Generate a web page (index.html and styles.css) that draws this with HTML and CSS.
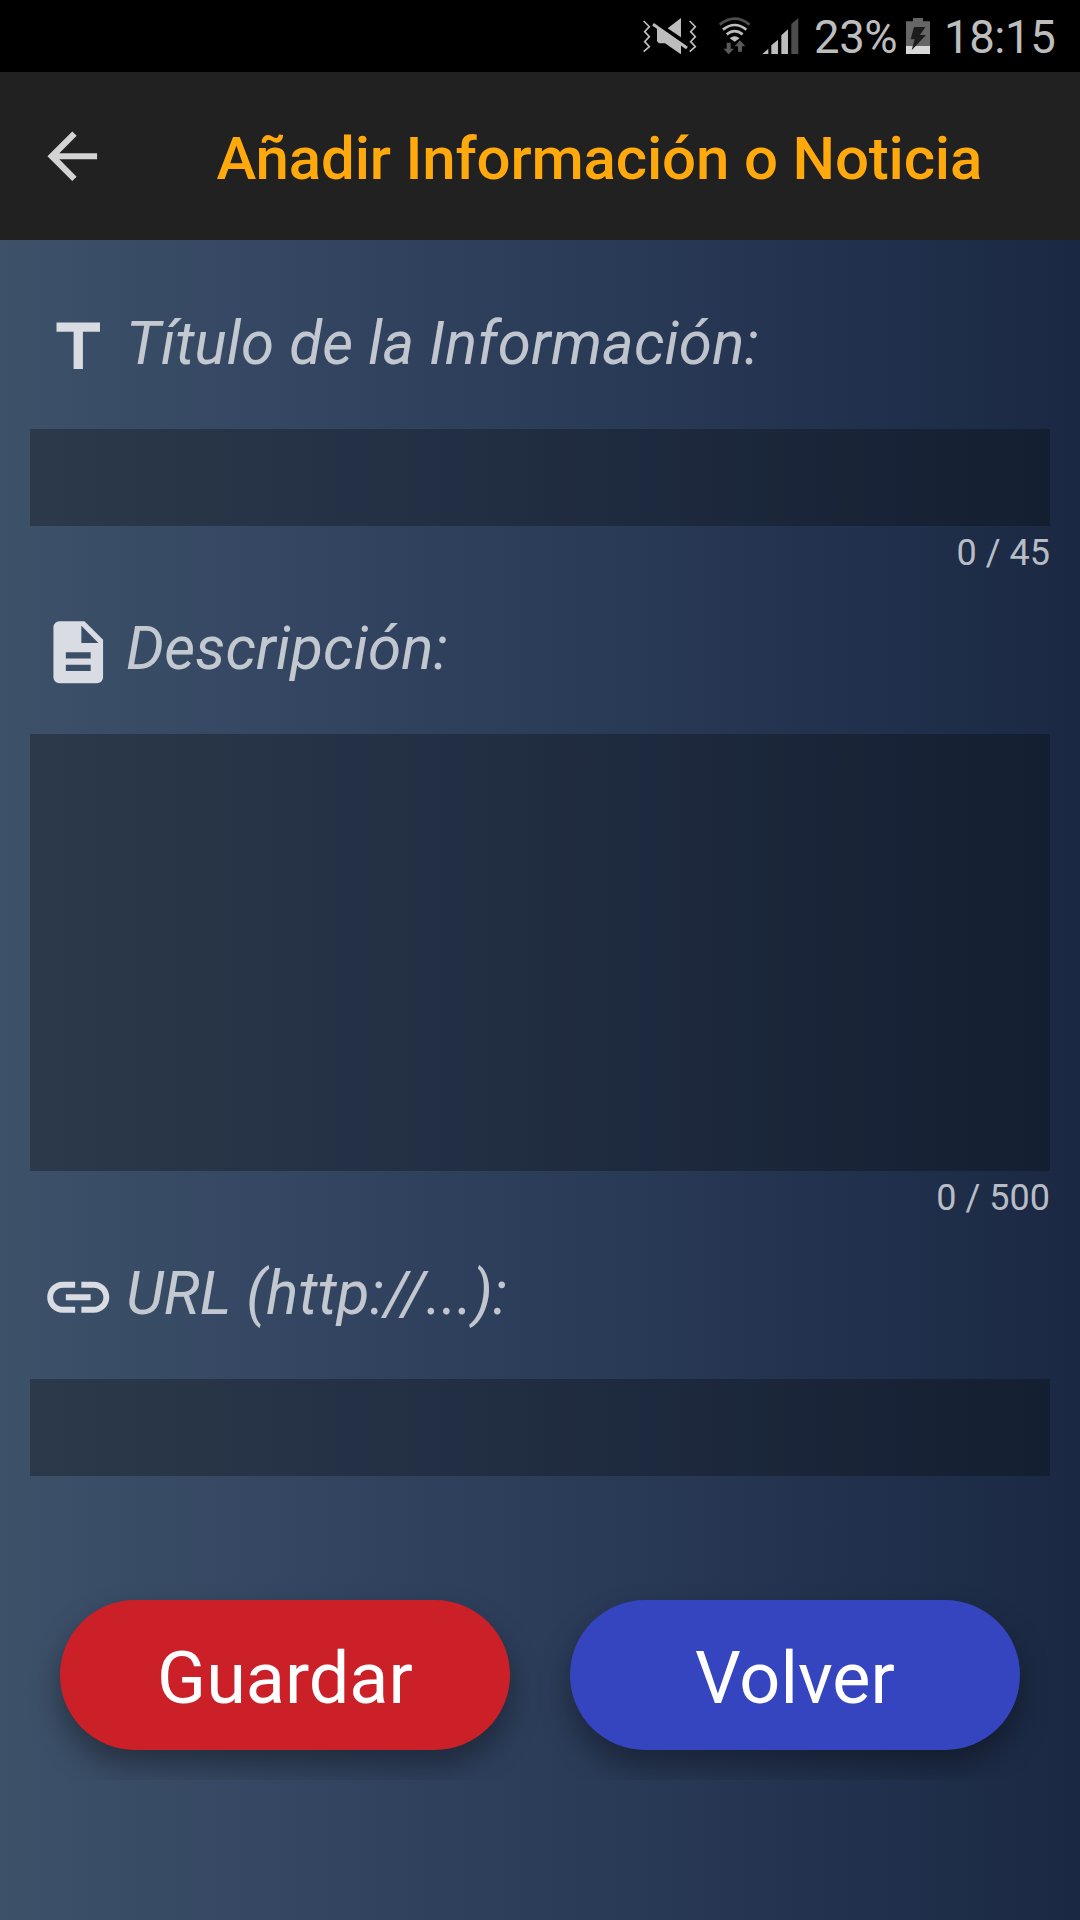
FILE: index.html
```html
<!DOCTYPE html>
<html lang="es">
<head>
<meta charset="utf-8">
<title>Añadir Información o Noticia</title>
<link rel="stylesheet" href="styles.css">
</head>
<body>
<div class="status">
  <svg class="status-mute" viewBox="0 0 162 110" fill="#bdbdbd">
    <path d="M74 31L114 0v58z"/>
    <path d="M42 30l72 50v29L66 76H48l-6-6z"/>
    <path d="M30 19l102 71" stroke="#bdbdbd" stroke-width="9" fill="none"/>
    <g fill="none" stroke="#bdbdbd" stroke-width="5">
      <path d="M2 9l17 17L5 41l14 15L5 71l14 15L2 101"/>
      <path d="M140 9l17 17-14 15 14 15-14 15 14 15-17 15"/>
    </g>
  </svg>
  <svg class="status-wifi" viewBox="0 0 94 112">
    <g fill="none" stroke-width="8">
      <path d="M2 23Q47-13 92 23" stroke="#4d4d4d"/>
      <path d="M12 38Q47 10 82 38" stroke="#bdbdbd"/>
      <path d="M23 52Q47 33 71 52" stroke="#bdbdbd"/>
    </g>
    <path d="M32 64Q47 52 62 64L47 74z" fill="#bdbdbd"/>
    <path d="M23 77h12v18h10L29 112 13 95h10zM57 104V88H47l16-18 16 18H69v16z" fill="#5a5a5a"/>
  </svg>
  <svg class="status-signal" viewBox="0 0 110 109">
    <path d="M0 109l19-17v17zM28 82l20-17v44H28zM58 52l20-18v75H58z" fill="#bdbdbd"/>
    <path d="M88 18L109 0v109H88z" fill="#4d4d4d"/>
  </svg>
  <span class="status-percent">23%</span>
  <svg class="status-battery" viewBox="0 0 72 108">
    <path d="M0 10h21V0h30v10h21v98H0z" fill="#666"/>
    <path d="M0 84h72v24H0z" fill="#d8d8d8"/>
    <path d="M24 27h34L42 51h18L17 97l9-33H14z" fill="#1c1c1c"/>
  </svg>
  <span class="status-time">18:15</span>
</div>

<header class="toolbar">
  <svg class="icon" viewBox="0 0 24 24" fill="#d3d3d3"><path d="M20 11H7.83l5.59-5.59L12 4l-8 8 8 8 1.41-1.41L7.83 13H20v-2z"/></svg>
  <h1 class="toolbar-title">Añadir Información o Noticia</h1>
</header>

<main class="content">
  <label class="label label-title" for="titulo">
    <svg class="icon" viewBox="0 0 24 24"><path d="M5 4v3h5.500v12h3V7H19V4z"/></svg>
    <span>Título de la Información:</span>
  </label>
  <input class="field" id="titulo" type="text" maxlength="45">
  <div class="counter">0 / 45</div>

  <label class="label" for="descripcion">
    <svg class="icon" viewBox="0 0 24 24"><path d="M14 2H6c-1.100 0-1.990.9-1.990 2L4 20c0 1.100.89 2 1.990 2H18c1.100 0 2-.9 2-2V8l-6-6zm2 16H8v-2h8v2zm0-4H8v-2h8v2zm-3-5V3.500L18.500 9H13z"/></svg>
    <span>Descripción:</span>
  </label>
  <textarea class="field field-area" id="descripcion" maxlength="500"></textarea>
  <div class="counter">0 / 500</div>

  <label class="label" for="url">
    <svg class="icon" viewBox="0 0 24 24"><path d="M3.900 12c0-1.710 1.390-3.100 3.100-3.100h4V7H7c-2.760 0-5 2.240-5 5s2.240 5 5 5h4v-1.900H7c-1.710 0-3.100-1.390-3.100-3.100zM8 13h8v-2H8v2zm9-6h-4v1.900h4c1.710 0 3.100 1.390 3.100 3.100s-1.390 3.100-3.100 3.100h-4V17h4c2.760 0 5-2.240 5-5s-2.240-5-5-5z"/></svg>
    <span>URL (http://...):</span>
  </label>
  <input class="field" id="url" type="text">

  <div class="actions">
    <button class="btn btn-save" type="button">Guardar</button>
    <button class="btn btn-back" type="button">Volver</button>
  </div>
</main>
</body>
</html>
```
FILE: styles.css
```css
* { box-sizing: border-box; }

body {
  margin: 0;
  width: 1080px;
  height: 1920px;
  display: flex;
  flex-direction: column;
  overflow: hidden;
  font-family: Roboto, sans-serif;
}

.status {
  height: 72px;
  padding-right: 24px;
  display: flex;
  justify-content: flex-end;
  align-items: center;
  background: #000;
  color: #bdbdbd;
  font-size: 45.500px;
  line-height: 72px;
}
.status svg { flex: none; display: block; }
.status span { padding-top: 4px; letter-spacing: -.4px; }
.status-mute { width: 54px; height: 36.67px; margin-right: 22px; }
.status-wifi { width: 31.33px; height: 37.33px; margin-right: 12.500px; }
.status-signal { width: 36.67px; height: 36.33px; margin-right: 15px; }
.status-percent { width: 92px; white-space: nowrap; }
.status-battery { width: 24px; height: 36px; }
.status-time { width: 126px; padding-left: 14px; white-space: nowrap; }

.toolbar {
  height: 168px;
  padding-left: 34.500px;
  display: flex;
  align-items: center;
  background: #212121;
}
.toolbar-title {
  margin: 6px 0 0 107.500px;
  color: #ffa90d;
  font-size: 60px;
  font-weight: 500;
  line-height: 72px;
  letter-spacing: -.17px;
  white-space: nowrap;
}

.icon { flex: none; display: block; width: 74.500px; height: 74.500px; }

.content {
  flex: 1;
  padding: 0 30px;
  display: flex;
  flex-direction: column;
  background: linear-gradient(to right, #3d5169 0%, #31425f 36%, #2a3b58 55%, #1a2843 100%);
}

.label {
  height: 165px;
  padding: 27px 0 0 10.500px;
  display: flex;
  align-items: flex-start;
  color: rgba(255, 255, 255, .7);
  font-size: 60px;
  font-style: italic;
  line-height: 72px;
  letter-spacing: .14px;
  white-space: nowrap;
}
.label-title { height: 189px; padding-top: 51px; }
.label .icon { margin: 19px 11px 0 0; fill: #d9dce2; }
.label span { margin-top: 17px; }

.field {
  display: block;
  width: 100%;
  height: 97px;
  margin: 0;
  padding: 0 20px;
  border: 0;
  border-radius: 0;
  outline: 0;
  resize: none;
  background: rgba(5, 7, 5, .3);
  color: #fff;
  font: 48px Roboto, sans-serif;
}
.field-area { height: 437px; }

.counter {
  height: 43px;
  padding-top: 6px;
  color: rgba(255, 255, 255, .7);
  font-size: 36px;
  line-height: 43px;
  text-align: right;
}

.actions {
  margin: 94px -30px 0;
  padding: 30px 60px;
  display: flex;
  gap: 60px;
  overflow: hidden;
}
.btn {
  flex: 1;
  height: 150px;
  padding: 8px 0 0;
  border: 0;
  border-radius: 75px;
  color: #fff;
  font: 72px/84px Roboto, sans-serif;
  box-shadow: 0 16px 30px rgba(0, 0, 0, .36);
}
.btn-save { background: #cb2027; }
.btn-back { background: #3545c0; }
```
